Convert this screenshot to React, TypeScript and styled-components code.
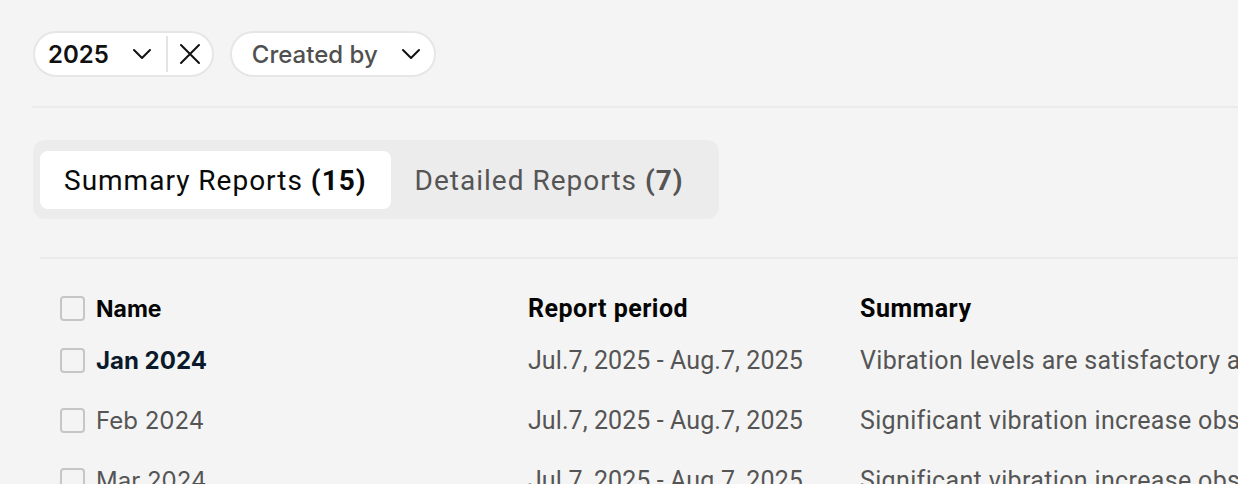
import styled, { createGlobalStyle } from 'styled-components';

const GlobalStyle = createGlobalStyle`
  html, body {
    margin: 0;
    padding: 0;
    background: #f4f4f4;
  }
  * {
    box-sizing: border-box;
  }
`;

type Report = {
  name: string;
  period: string;
  summary: string;
  unread?: boolean;
};

const reports: Report[] = [
  {
    name: 'Jan 2024',
    period: 'Jul.7, 2025 - Aug.7, 2025',
    summary: 'Vibration levels are satisfactory across all monitored assets',
    unread: true,
  },
  {
    name: 'Feb 2024',
    period: 'Jul.7, 2025 - Aug.7, 2025',
    summary: 'Significant vibration increase observed on pump P-101',
  },
  {
    name: 'Mar 2024',
    period: 'Jul.7, 2025 - Aug.7, 2025',
    summary: 'Significant vibration increase observed on compressor C-204',
  },
];

const Chevron = () => (
  <svg width="20" height="12" viewBox="0 0 20 12" fill="none">
    <path d="M2 2 L10 10 L18 2" stroke="#111" strokeWidth="2" strokeLinecap="round" strokeLinejoin="round" />
  </svg>
);

const Close = () => (
  <svg width="22" height="22" viewBox="0 0 22 22" fill="none">
    <path d="M2 2 L20 20 M20 2 L2 20" stroke="#111" strokeWidth="2" strokeLinecap="round" />
  </svg>
);

export default function App() {
  return (
    <Page>
      <GlobalStyle />
      <Filters>
        <Pill $active>
          <PillLabel $active>2025</PillLabel>
          <IconSlot>
            <Chevron />
          </IconSlot>
          <PillDivider />
          <IconSlot>
            <Close />
          </IconSlot>
        </Pill>
        <Pill>
          <PillLabel>Created by</PillLabel>
          <IconSlot>
            <Chevron />
          </IconSlot>
        </Pill>
      </Filters>
      <Rule />
      <Tabs>
        <Tab $active>
          Summary Reports <b>(15)</b>
        </Tab>
        <Tab>
          Detailed Reports <b>(7)</b>
        </Tab>
      </Tabs>
      <TableRule />
      <Table>
        <HeaderRow>
          <NameCell>
            <Checkbox />
            <HeadText>Name</HeadText>
          </NameCell>
          <HeadText $alt>Report period</HeadText>
          <HeadText $alt>Summary</HeadText>
        </HeaderRow>
        {reports.map((r) => (
          <Row key={r.name}>
            <NameCell>
              <Checkbox />
              <NameText $unread={r.unread}>{r.name}</NameText>
            </NameCell>
            <CellText>{r.period}</CellText>
            <CellText $wide>{r.summary}</CellText>
          </Row>
        ))}
      </Table>
    </Page>
  );
}

const Page = styled.main`
  width: 100%;
  height: 484px;
  overflow: hidden;
  padding: 31px 0 0 32px;
  font-family: Inter, 'Liberation Sans', sans-serif;
`;

const Filters = styled.div`
  display: flex;
  align-items: center;
  gap: 16px;
  padding-left: 1px;
`;

const Pill = styled.div<{ $active?: boolean }>`
  display: flex;
  align-items: center;
  height: 46px;
  background: #ffffff;
  border: 2px solid #e6e6e6;
  border-radius: 23px;
  padding: ${(p) => (p.$active ? '0 11px 0 13px' : '0 13px 0 20px')};
`;

const PillLabel = styled.span<{ $active?: boolean }>`
  font-size: 24px;
  font-weight: ${(p) => (p.$active ? 600 : 500)};
  color: ${(p) => (p.$active ? '#111111' : '#505050')};
  margin-right: 23px;
`;

const IconSlot = styled.span`
  display: flex;
  align-items: center;
  justify-content: center;
`;

const PillDivider = styled.span`
  width: 2px;
  height: 36px;
  background: #e4e4e4;
  margin: 0 11px 0 14px;
`;

const Rule = styled.div`
  height: 2px;
  background: #ebebeb;
  margin-top: 29px;
`;

const Tabs = styled.div`
  display: inline-flex;
  align-items: center;
  margin-top: 32px;
  margin-left: 1px;
  padding: 11px 11px 10px 7px;
  background: #ececec;
  border-radius: 12px;
`;

const Tab = styled.div<{ $active?: boolean }>`
  height: 58px;
  display: flex;
  align-items: center;
  padding: 0 24px;
  border-radius: 8px;
  background: ${(p) => (p.$active ? '#ffffff' : 'transparent')};
  color: ${(p) => (p.$active ? '#0a0a0a' : '#555555')};
  font-family: Roboto, 'Liberation Sans', sans-serif;
  font-size: 28px;
  letter-spacing: 1px;
  white-space: pre;

  b {
    font-weight: 700;
  }
`;

const TableRule = styled.div`
  height: 2px;
  background: #ebebeb;
  margin: 38px 0 0 8px;
`;

const Table = styled.div`
  display: flex;
  flex-direction: column;
  padding: 35px 0 0 28px;
`;

const HeaderRow = styled.div`
  display: grid;
  grid-template-columns: 468px 332px 1fr;
  align-items: center;
  height: 26px;
  margin-bottom: 26px;
`;

const Row = styled(HeaderRow)`
  height: 26px;
  margin-bottom: 34px;
  white-space: nowrap;
`;

const NameCell = styled.div`
  display: flex;
  align-items: center;
  gap: 11px;
`;

const Checkbox = styled.span`
  width: 25px;
  height: 25px;
  border: 2px solid #c6c6c6;
  border-radius: 4px;
  background: transparent;
  flex-shrink: 0;
`;

const HeadText = styled.span<{ $alt?: boolean }>`
  font-family: ${(p) => (p.$alt ? "Roboto, 'Liberation Sans', sans-serif" : "Inter, 'Liberation Sans', sans-serif")};
  font-size: ${(p) => (p.$alt ? '25px' : '23px')};
  letter-spacing: ${(p) => (p.$alt ? '0.5px' : '0')};
  font-weight: 700;
  color: #050505;
`;

const NameText = styled.span<{ $unread?: boolean }>`
  font-size: 24px;
  font-weight: ${(p) => (p.$unread ? 700 : 400)};
  color: ${(p) => (p.$unread ? '#0b1a2b' : '#555555')};
`;

const CellText = styled.span<{ $wide?: boolean }>`
  font-family: Roboto, 'Liberation Sans', sans-serif;
  font-size: 25px;
  letter-spacing: ${(p) => (p.$wide ? '0.35px' : '0.08px')};
  color: #555555;
  overflow: hidden;
`;
